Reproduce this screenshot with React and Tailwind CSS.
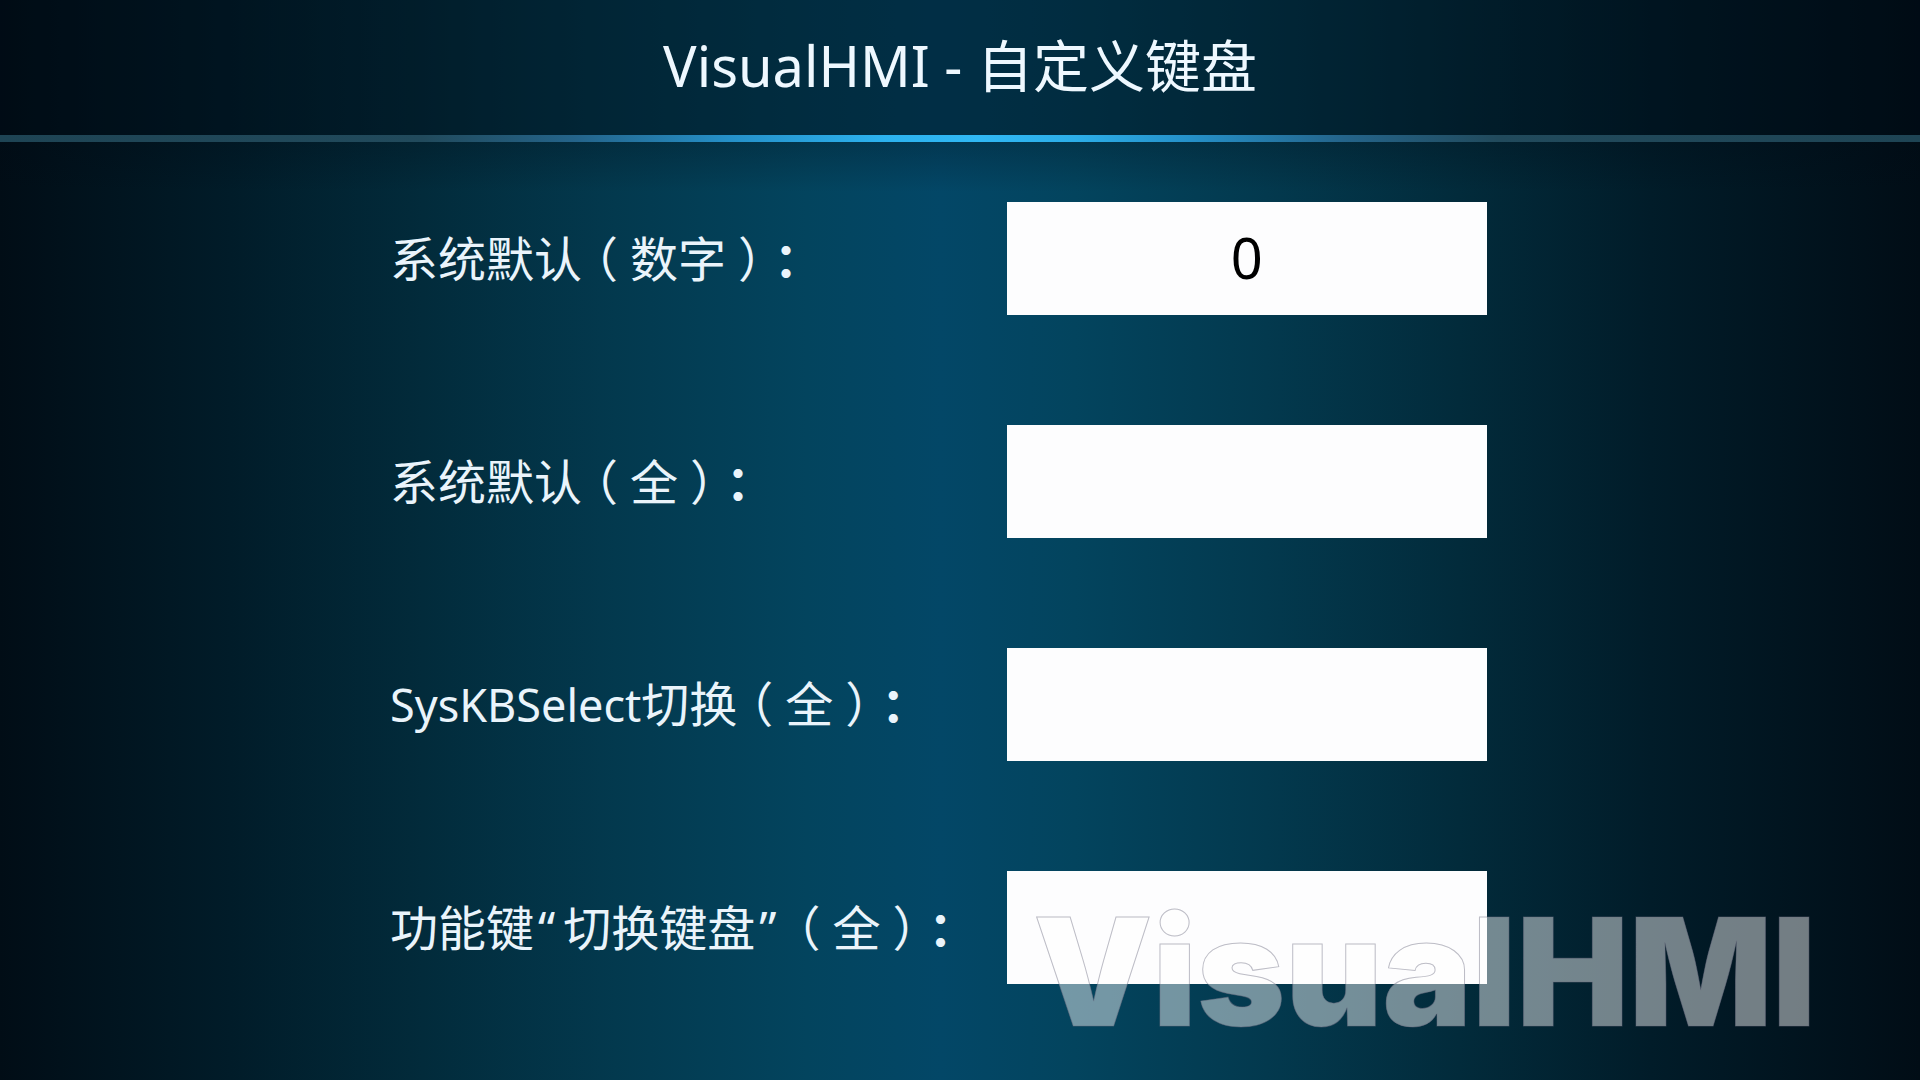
import { useState } from "react";

const Half = ({ children, className = "" }) => (
  <span className={`[font-feature-settings:'halt'] ${className}`}>{children}</span>
);

const Scope = ({ children }) => (
  <>
    <Half className="mx-3">（</Half>
    {children}
    <Half className="mx-3">）</Half>
    <Half className="font-bold">：</Half>
  </>
);

const fields = [
  { id: "system-number", initial: "0", label: <>系统默认<Scope>数字</Scope></> },
  { id: "system-full", initial: "", label: <>系统默认<Scope>全</Scope></> },
  {
    id: "syskb-select",
    initial: "",
    label: <><span className="text-[45px]">SysKBSelect</span>切换<Scope>全</Scope></>,
  },
  {
    id: "function-key",
    initial: "",
    label: (
      <>
        功能键<span className="ml-1 mr-2">“</span>切换键盘<span className="ml-1 mr-2">”</span>
        <Scope>全</Scope>
      </>
    ),
  },
];

function Field({ id, label, initial }) {
  const [value, setValue] = useState(initial);
  return (
    <div className="grid grid-cols-[616fr_480fr] items-center">
      <label htmlFor={id} className="whitespace-nowrap text-[48px] leading-[64px] text-[#eaf4fb]">
        {label}
      </label>
      <input
        id={id}
        type="text"
        value={value}
        onChange={(e) => setValue(e.target.value)}
        className="h-[113px] w-full min-w-0 bg-[#fdfdfe] pb-1 text-center text-[56px] leading-[64px] text-black outline-none"
      />
    </div>
  );
}

export default function App() {
  return (
    <div
      lang="zh-CN"
      className="relative flex min-h-screen flex-col overflow-hidden bg-[linear-gradient(90deg,#010d16_0%,#011c29_12%,#022b3b_22%,#03394e_32%,#03445e_42%,#034767_49%,#03445e_56%,#03394e_66%,#022b3b_76%,#011c29_86%,#010d16_100%)] font-['Noto_Sans','Noto_Sans_CJK_SC',sans-serif] [text-spacing-trim:space-all]"
    >
      <header className="flex h-[135px] items-center justify-center bg-[#000a14]/40 pb-[6px]">
        <h1 className="text-[56px] leading-[64px] text-[#eef8ff]">VisualHMI - 自定义键盘</h1>
      </header>
      <div className="h-[7px] bg-[linear-gradient(90deg,#1e4454_0%,#214a5c_22%,#24648a_30%,#2590c8_38%,#2cb2ee_46%,#30b8f4_51%,#2caee8_56%,#2590c8_62%,#24648a_70%,#214a5c_78%,#1e4454_100%)]" />
      <main className="flex grow flex-col gap-[110px] bg-[linear-gradient(180deg,rgba(0,10,20,0.25)_0,rgba(0,10,20,0)_50px)] pt-[60px] pr-[433px] pb-[96px] pl-[390px]">
        {fields.map((f) => (
          <Field key={f.id} {...f} />
        ))}
      </main>
      <div className="pointer-events-none absolute right-[104px] bottom-[28px] font-['Inter',sans-serif] text-[150px] leading-[160px] font-black text-white/45 [-webkit-text-stroke:1px_rgba(110,110,130,0.45)]">
        VisualHMI
      </div>
    </div>
  );
}
